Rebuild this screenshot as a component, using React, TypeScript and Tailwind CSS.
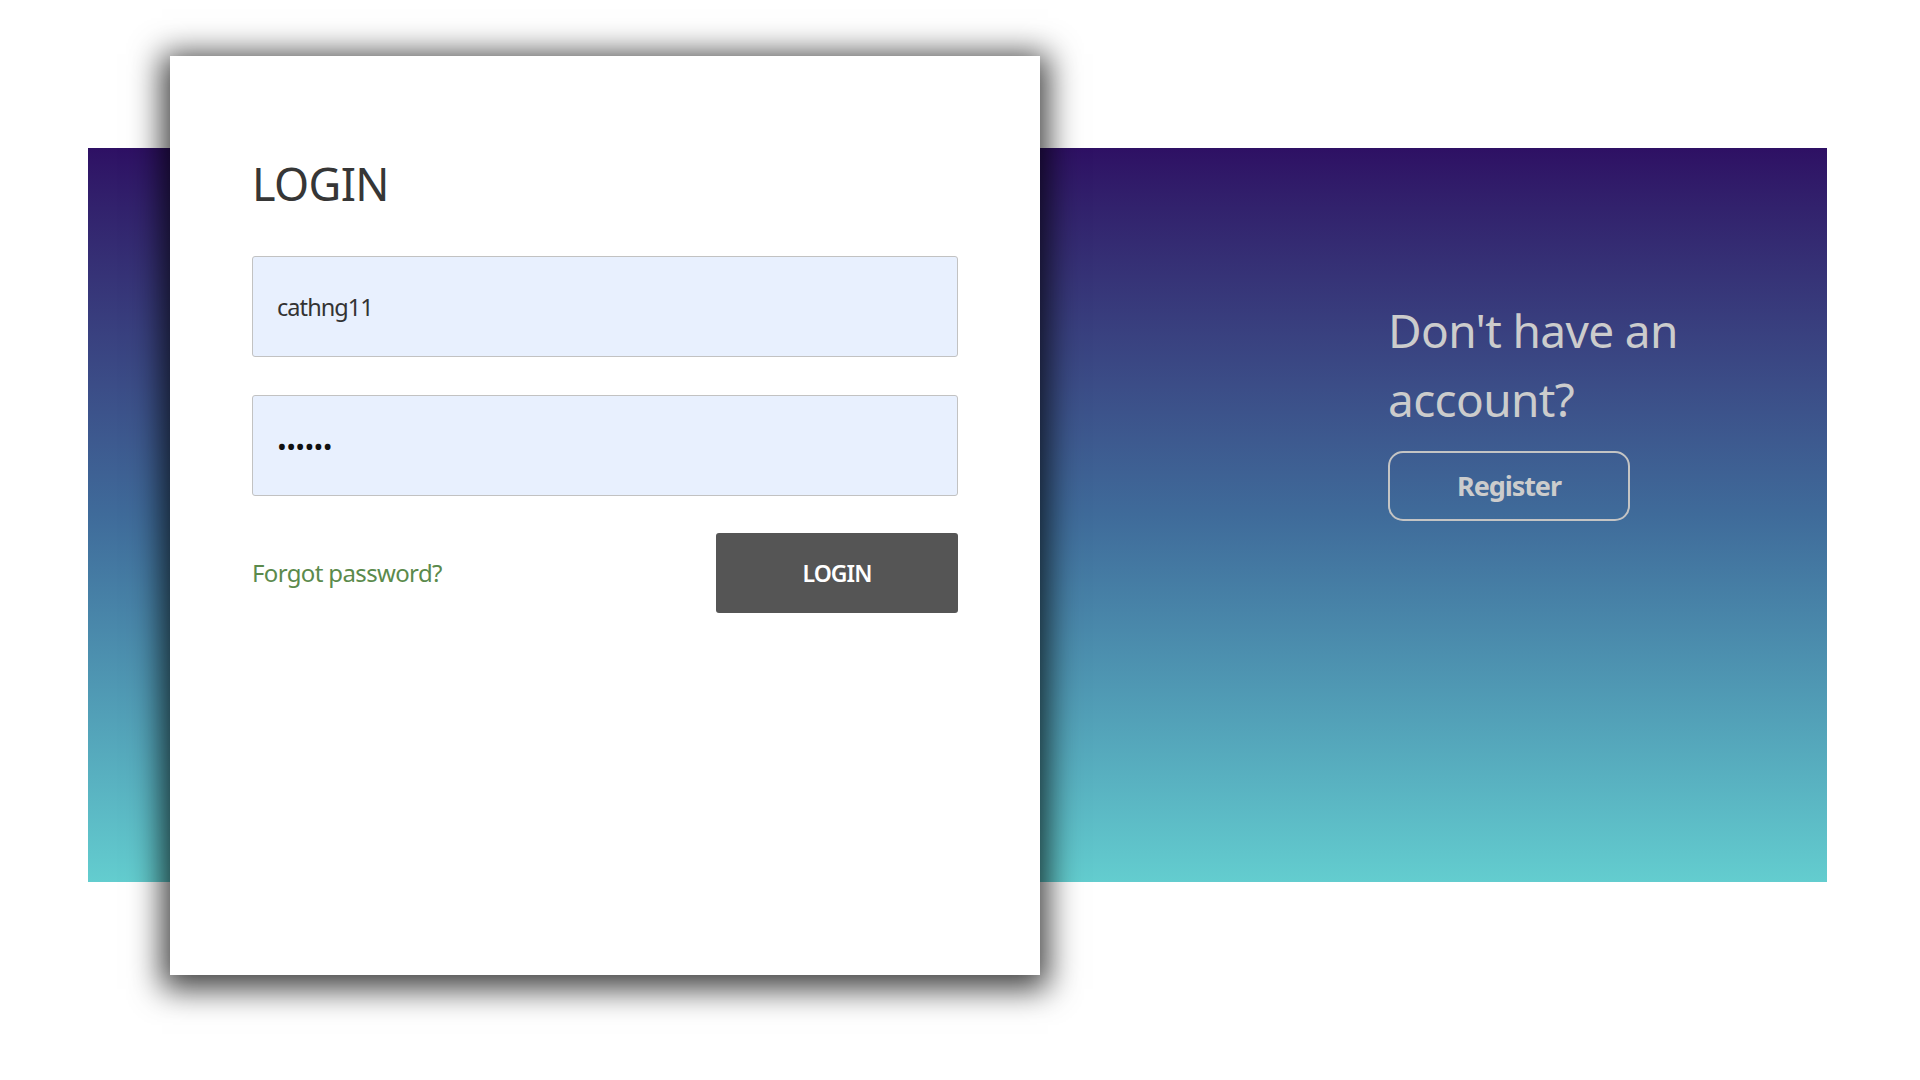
import React from "react";

export default function App() {
  return (
    <div className="relative w-[1920px] h-[1080px] overflow-hidden bg-white pt-[148px] pl-[88px] font-['Noto_Sans','Open_Sans',sans-serif] tracking-[-0.04em]">
      {/* gradient banner */}
      <div className="flex w-[1739px] h-[734px] bg-gradient-to-b from-[#2e1064] via-[#3f6b9a] to-[#63cdcf]">
        <div className="w-[1300px] shrink-0" />
        <div className="pt-[148px]">
          <h2 className="w-[320px] text-[46px] leading-[69px] text-[#cccccc]">
            Don't have an account?
          </h2>
          <button className="mt-[17px] w-[242px] h-[70px] rounded-[15px] border-2 border-[#c4c4c4] text-[27px] font-bold text-[#cccccc] tracking-[-0.04em]">
            Register
          </button>
        </div>
      </div>

      {/* login card */}
      <div className="absolute left-[170px] top-[56px] w-[870px] h-[919px] bg-white px-[82px] pt-[105px] shadow-[0_6px_30px_8px_rgba(0,0,0,0.75)]">
        <h1 className="text-[45px] leading-none text-[#363636]">LOGIN</h1>
        <div className="mt-[50px] flex flex-col gap-[38px]">
          <input
            readOnly
            value="cathng11"
            className="w-full h-[101px] rounded-[3px] border border-[#c2c2c2] bg-[#e8f0fe] pl-6 text-[23.5px] text-[#333] tracking-[-0.04em] outline-none"
          />
          <input
            readOnly
            type="password"
            value="123456"
            className="w-full h-[101px] rounded-[3px] border border-[#c2c2c2] bg-[#e8f0fe] pl-6 text-[26px] text-[#111] outline-none"
          />
        </div>
        <div className="mt-[37px] flex items-center justify-between">
          <a className="text-[24px] text-[#5b8a4c]">Forgot password?</a>
          <button className="w-[242px] h-[80px] rounded-[3px] bg-[#555555] text-[23px] font-semibold text-white tracking-[-0.04em]">
            LOGIN
          </button>
        </div>
      </div>
    </div>
  );
}
